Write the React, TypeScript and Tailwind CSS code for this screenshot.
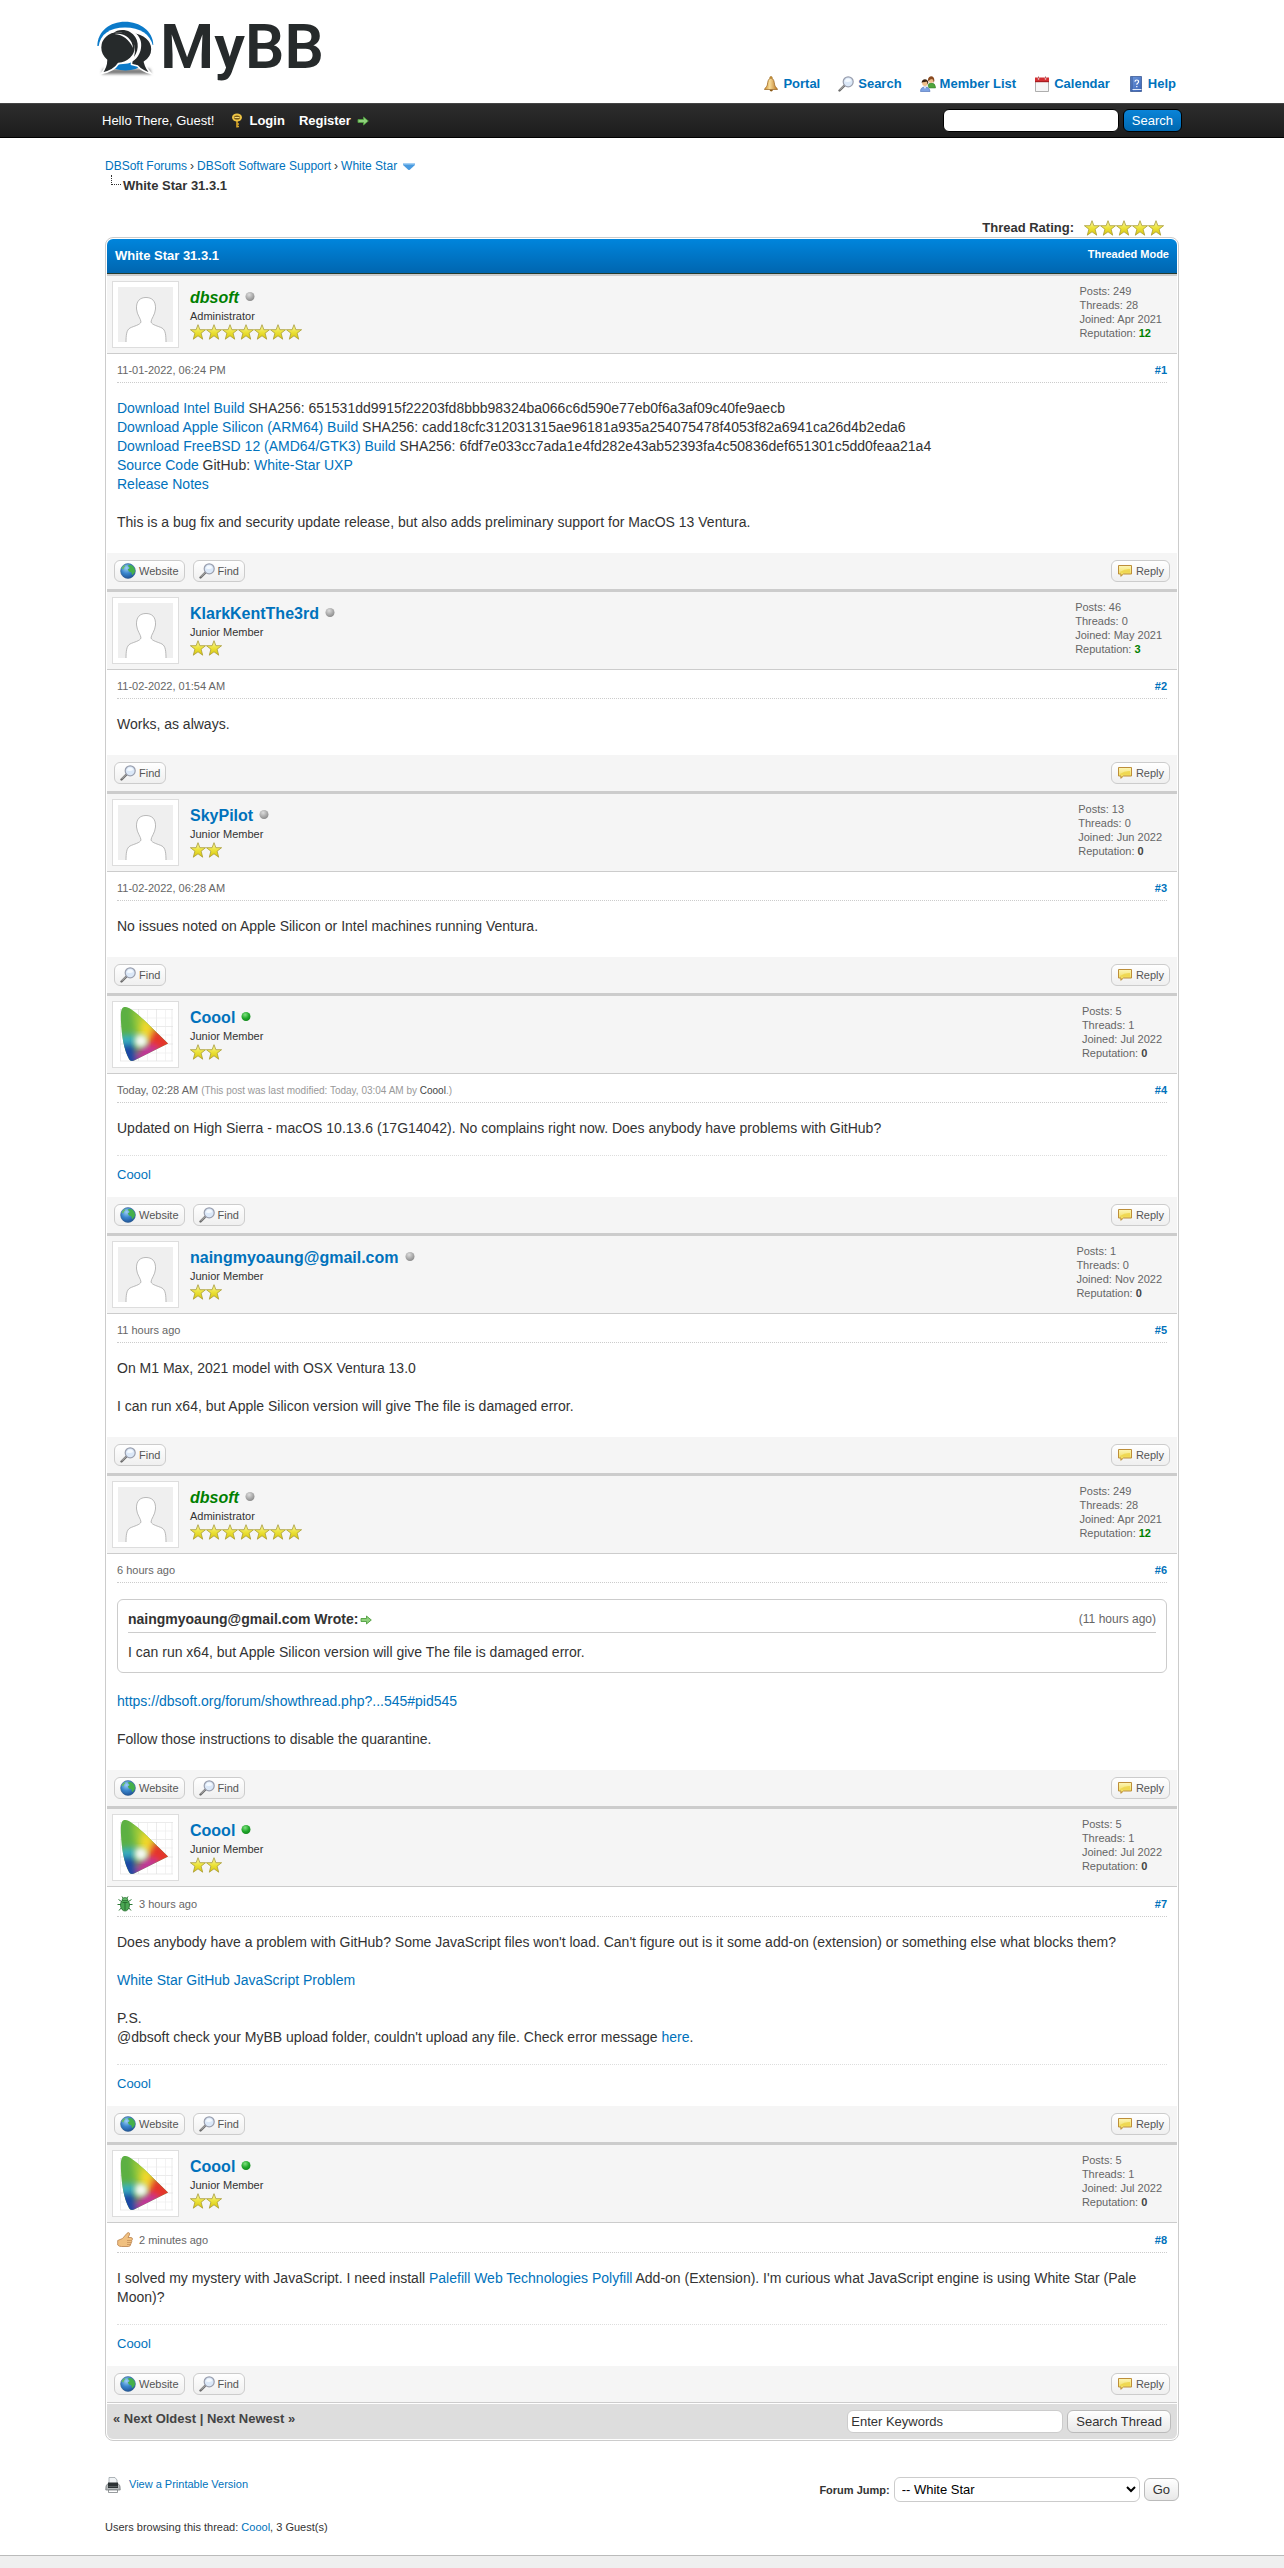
import { ReactNode } from "react";
import clsx from "clsx";

type Post = {
	id: number;
	author: string;
	admin?: boolean;
	online?: boolean;
	title: string;
	stars: number;
	avatar: "person" | "gamut";
	posts: number;
	threads: number;
	joined: string;
	rep: number;
	date: string;
	edited?: boolean;
	icon?: ReactNode;
	website?: boolean;
	signature?: string;
	body: ReactNode;
};

const A = ({ children }: { children: ReactNode }) => (
	<a href="#" className="text-[#0072bc] hover:underline">
		{children}
	</a>
);

/* ---------- icons ---------- */

function SharedGradients() {
	return (
		<svg className="absolute h-0 w-0" aria-hidden="true">
			<defs>
				<linearGradient id="starFill" x1="0" y1="0" x2="0" y2="1">
					<stop offset="0" stopColor="#fbf8b0" />
					<stop offset="0.5" stopColor="#ece33a" />
					<stop offset="1" stopColor="#d8c40c" />
				</linearGradient>
				<radialGradient id="globeFill" cx="0.4" cy="0.3" r="0.75">
					<stop offset="0" stopColor="#9fd0f5" />
					<stop offset="0.5" stopColor="#3a86cc" />
					<stop offset="1" stopColor="#1c4f94" />
				</radialGradient>
				<linearGradient id="bellFill" x1="0" y1="0" x2="1" y2="0">
					<stop offset="0" stopColor="#c98a2b" />
					<stop offset="0.4" stopColor="#f8dc98" />
					<stop offset="1" stopColor="#b97420" />
				</linearGradient>
				<linearGradient id="noteFill" x1="0" y1="0" x2="0" y2="1">
					<stop offset="0" stopColor="#fdf6b8" />
					<stop offset="1" stopColor="#efd84a" />
				</linearGradient>
				<linearGradient id="bookFill" x1="0" y1="0" x2="1" y2="1">
					<stop offset="0" stopColor="#6f9ade" />
					<stop offset="1" stopColor="#3a62b4" />
				</linearGradient>
				<radialGradient id="offFill" cx="0.4" cy="0.3" r="0.7">
					<stop offset="0" stopColor="#dcdcdc" />
					<stop offset="1" stopColor="#8c8c8c" />
				</radialGradient>
				<radialGradient id="onFill" cx="0.4" cy="0.3" r="0.7">
					<stop offset="0" stopColor="#7fe07f" />
					<stop offset="0.6" stopColor="#22a92c" />
					<stop offset="1" stopColor="#128a1c" />
				</radialGradient>
				<clipPath id="gamutClip">
					<path d="M6 0C3 1 2.500 6 3 15C3.500 28 6 43 11 52C12 54 14 54.500 16 53.500L50 36.500L26 13C18 6 12 1 9 0.300C8 0 7 0 6 0Z" />
				</clipPath>
				<filter id="gamutBlur" x="-50%" y="-50%" width="200%" height="200%">
					<feGaussianBlur stdDeviation="3" />
				</filter>
				<filter id="logoShadow" x="-20%" y="-50%" width="140%" height="200%">
					<feGaussianBlur stdDeviation="1.500" />
				</filter>
			</defs>
		</svg>
	);
}

function Logo() {
	return (
		<svg width="60" height="60" viewBox="0 0 60 60" aria-hidden="true">
			<path d="M7 50h47l1 5H6z" fill="#777" filter="url(#logoShadow)" />
			<path d="M1.300 27C1.500 12 14 2.700 29 2.700S57 12 57.300 26z" fill="#0b7ac9" />
			<path d="M2.500 28C4 15 14 8.500 29 8.500S54 15 57 27l-4 12H6z" fill="#fff" />
			<ellipse cx="29.500" cy="46.500" rx="14" ry="5" fill="#0b7ac9" />
			<path
				d="M37 13.500c11 1 19 8 19 16.500 0 5-3 10-7.500 13 1 4 3 8 6.500 11.500-6-1.500-10.500-4-13.500-7.500l-6-1.500z"
				fill="#262a2b"
				stroke="#fff"
				strokeWidth="1.600"
			/>
			<path
				d="M17 13C22 9 31 8.500 38 13c6 4 8 10 7 16-1 8-7 14-13 15.500l-10 1z"
				fill="#fff"
			/>
			<path
				d="M22 12.500c10 0 17.500 6.500 17.500 15.500S32 44 22.500 44.500C19.500 49.500 13 53 5.500 54.500 9 50 10.500 46 10.500 41 7 38 4.500 34 4.500 28.500 4.500 19.500 12 12.500 22 12.500z"
				fill="#262a2b"
				stroke="#fff"
				strokeWidth="1.600"
			/>
			<path d="M18 14c2-3 10-4.500 16-1 9 5 10 17 4 25 3-10-1-20-10-23.500-3.500-1.500-7-1.500-10-.5z" fill="#262a2b" />
			<path d="M18.500 15c10-1.500 18 5 18.500 14C33 20 27 16 18.500 15z" fill="#fff" />
		</svg>
	);
}

const BellIcon = () => (
	<svg width="16" height="16" viewBox="0 0 16 16" aria-hidden="true">
		<circle cx="8" cy="1.800" r="1.300" fill="#d9a23f" stroke="#8c5a17" strokeWidth=".5" />
		<path d="M8 2C5 2.500 4.800 6 4.300 9 3.900 11 2 11.500 1.500 13.500h13c-.5-2-2.400-2.500-2.800-4.500C11.200 6 11 2.500 8 2z" fill="url(#bellFill)" stroke="#96621d" strokeWidth=".7" />
		<path d="M6.500 13.800H10q-.3 1.700-1.700 1.700t-1.800-1.700z" fill="#8c5a17" />
	</svg>
);

const LensIcon = () => (
	<svg width="16" height="16" viewBox="0 0 16 16" aria-hidden="true">
		<path d="M6.500 9.500L1.500 14.500" stroke="#6c6c6c" strokeWidth="2.400" strokeLinecap="round" />
		<path d="M6.300 9.300L1.800 13.800" stroke="#bcbcbc" strokeWidth="1" />
		<circle cx="10.200" cy="5.800" r="5" fill="#dbe8f8" stroke="#9a9fae" strokeWidth="1.200" />
		<path d="M7 5.500a3.200 3.200 0 0 1 6.300-.6q-3 1.700-6.300.6z" fill="#f5faff" />
	</svg>
);

const MembersIcon = () => (
	<svg width="16" height="16" viewBox="0 0 16 16" aria-hidden="true">
		<path d="M8 10q0-3 3.500-3t4 4v1H9z" fill="#4fa43c" stroke="#2f7a22" strokeWidth=".5" />
		<circle cx="11" cy="4.300" r="2.700" fill="#edbd8e" />
		<path d="M8 5c-.6-6 7-6.500 6.300 0l-.6 2q0-3-1.500-4Q10 3 9 4.500z" fill="#8a4a20" />
		<path d="M.5 15.500q0-4.500 4.500-4.500t5 4.500z" fill="#7da3e3" stroke="#4569b5" strokeWidth=".6" />
		<circle cx="5" cy="7" r="2.900" fill="#f0c08a" />
		<path d="M1.700 7C1.200 2 8.600 1.800 8.300 7L7.500 8.500Q7.500 6 6.500 5.500 4 6.500 3 6z" fill="#3b2412" />
		<path d="M4 11l1 2 1-2z" fill="#fff" />
	</svg>
);

const CalendarIcon = () => (
	<svg width="16" height="16" viewBox="0 0 16 16" aria-hidden="true">
		<path d="M1.500 2.500h13v13h-13z" fill="#f6f6f6" stroke="#9a9a9a" strokeWidth=".8" />
		<path d="M1 1.500h14V6H1z" fill="#d22f33" />
		<path d="M1 5h14v1.200H1z" fill="#a81c20" />
		<path d="M4.500.5v3M11.500.5v3" stroke="#fff" strokeWidth="1.300" />
		<path d="M4.500.5v2M11.500.5v2" stroke="#8b1417" strokeWidth=".7" />
	</svg>
);

const HelpIcon = () => (
	<svg width="16" height="16" viewBox="0 0 16 16" aria-hidden="true">
		<path d="M2.500.5h11v15h-11z" fill="url(#bookFill)" stroke="#2d4d8c" strokeWidth=".7" />
		<path d="M4 .8v14.400" stroke="#2d4d8c" strokeWidth=".8" />
		<path d="M4.500 13.500h9" stroke="#dfe8f8" strokeWidth="1" />
		<path d="M7 5.800q0-1.800 1.800-1.800t1.800 1.600q0 1-1 1.700-.8.500-.8 1.400M8.800 10v1.300" fill="none" stroke="#fff" strokeWidth="1.200" />
	</svg>
);

const KeyIcon = () => (
	<svg width="12" height="16" viewBox="0 0 12 16" aria-hidden="true">
		<path d="M6 8v6.500M6 11h2M6 13.500h2" stroke="#d9a628" strokeWidth="1.600" />
		<ellipse cx="6" cy="4.500" rx="4" ry="3" fill="#6b4c0e" stroke="#edc344" strokeWidth="2" />
		<path d="M3.500 4.500h5" stroke="#f7dc78" strokeWidth="1.200" />
	</svg>
);

const ArrowIcon = () => (
	<svg width="12" height="12" viewBox="0 0 12 12" aria-hidden="true">
		<path d="M1 4.500h5.500V2L11.300 6 6.500 10V7.500H1z" fill="#8fd07c" stroke="#4f9e3e" strokeWidth=".9" strokeLinejoin="round" />
	</svg>
);

const GlobeIcon = () => (
	<svg width="16" height="16" viewBox="0 0 16 16" aria-hidden="true">
		<circle cx="8" cy="8" r="7.400" fill="url(#globeFill)" stroke="#34608f" strokeWidth=".6" />
		<path d="M7.500 2.500q3-1.500 5.500.8 2.500 2.500 2 5.700-1.500 2-2.500 3.200-1-.5-1-2.700L9 8.500 7.800 6.500l2-1.500z" fill="#45b04a" />
		<path d="M1.500 5.500Q2.500 3 5 2q1 1-.5 2t-.8 2.500z" fill="#63bf62" />
	</svg>
);

const NoteIcon = () => (
	<svg width="16" height="16" viewBox="0 0 16 16" aria-hidden="true">
		<path d="M1.500 2.500h13v8.500H6.500L3.800 13.300 4 11H1.500z" fill="url(#noteFill)" stroke="#bd8e3a" strokeWidth="1" strokeLinejoin="round" />
		<path d="M3 9q5-3.500 10-3V9.800H3z" fill="#ecd23e" opacity=".7" />
	</svg>
);

const BugIcon = () => (
	<svg width="16" height="16" viewBox="0 0 16 16" aria-hidden="true">
		<path d="M4.500 5.500L1.500 3.500M11.500 5.500l3-2M4 8.500H.5M12 8.500h3.500M4.500 11.500l-2.500 3M11.500 11.500l2.500 3M6 2L5 .5M10 2l1-1.500" stroke="#2c7a35" strokeWidth="1" fill="none" />
		<ellipse cx="8" cy="9" rx="4.500" ry="6" fill="#4aa653" stroke="#246b2c" strokeWidth=".8" />
		<path d="M5 4.500q0-3 3-3t3 3z" fill="#62b869" stroke="#246b2c" strokeWidth=".7" />
		<path d="M8 6.500v7.500M5.500 6.500h5" stroke="#1f6327" strokeWidth=".8" />
	</svg>
);

const ThumbIcon = () => (
	<svg width="16" height="16" viewBox="0 0 16 16" aria-hidden="true">
		<path
			d="M.7 8.500L5.500 6.500 10 1.300q1.500-1.500 2.600 0 .3 1.500-1.600 4.200h3q1.800.3 1.400 1.800-.2 1-.7 1.200.4 1-.3 1.700.1 1.200-.6 1.600 0 2.500-2.300 2.700H4.500q-2.500 0-3.800-1.500z"
			fill="#f0c080"
			stroke="#b9824e"
			strokeWidth=".8"
			strokeLinejoin="round"
		/>
		<path d="M10 8.500h4.700M10 10.500h4.400M10 12.500h3.700" stroke="#b9824e" strokeWidth=".6" />
	</svg>
);

const PrinterIcon = () => (
	<svg width="16" height="16" viewBox="0 0 16 16" aria-hidden="true">
		<path d="M4 .5h6L12 3v4H4z" fill="#f1f4f6" stroke="#8e979b" strokeWidth=".7" />
		<path d="M.8 13q-.5-5 2.200-6.500h10Q15.700 8 15.200 13z" fill="#b8bcbe" stroke="#6b7174" strokeWidth=".7" />
		<path d="M3 5.500h10V11H3z" fill="#2d3335" />
		<path d="M3.500 9.500h9" stroke="#62696c" strokeWidth=".8" />
		<path d="M3.500 13h9v2.500h-9z" fill="#fff" stroke="#6b7174" strokeWidth=".7" />
	</svg>
);

const Stars = ({ count }: { count: number }) => (
	<svg width={count * 16} height="16" viewBox={`0 0 ${count * 16} 16`} role="img" aria-label={`${count} stars`}>
		{Array.from({ length: count }, (_, i) => (
			<path
				key={i}
				transform={`translate(${i * 16} 0)`}
				d="M8 .7l1.900 5h5.700l-4.500 3.500 1.600 6L8 11.800l-4.700 3.400 1.600-6L.4 5.700h5.700z"
				fill="url(#starFill)"
				stroke="#a89c35"
				strokeWidth=".8"
				strokeLinejoin="round"
			/>
		))}
	</svg>
);

function PersonAvatar() {
	return (
		<svg width="55" height="55" viewBox="0 0 55 55" role="img" aria-label="Avatar">
			<path d="M0 0h55v55H0z" fill="#efefef" />
			<path
				d="M8 56c0-8 .5-13 4-15 4-2 10-3 11-6 0-3-4-7-4.500-13C18 14 22 10.500 28 10.500S38 14 37.500 22C37 28 33 32 33 35c1 3 7 4 11 6 3.500 2 4 7 4 15z"
				fill="#fff"
				stroke="#a8a8a8"
				strokeWidth=".8"
			/>
		</svg>
	);
}

function GamutAvatar() {
	return (
		<svg width="55" height="55" viewBox="0 0 55 55" role="img" aria-label="Avatar">
			<path
				d="M2 2.500h53M2 19.500h53M2 37h53M2 54h53M2.500 2v52M20.500 2v52M38.500 2v52M54 2v52"
				stroke="#ddd"
				strokeWidth=".6"
			/>
			<path d="M2 11h53M2 28h53M2 46h53M11.500 2v52M29.500 2v52M47.500 2v52" stroke="#ebebeb" strokeWidth=".6" />
			<g clipPath="url(#gamutClip)">
				<path d="M0 0h55v55H0z" fill="#5cb043" />
				<g filter="url(#gamutBlur)">
					<path d="M14 0L32 12 26 30 17 26z" fill="#9ecb38" />
					<path d="M26 8l14 15-11 11-7-8z" fill="#f3d92c" />
					<path d="M36 20l24 16-16 10-16-9z" fill="#e5352b" />
					<path d="M23 40l12-2 7 6-20 14-4-6z" fill="#c4309a" />
					<path d="M-4 35l20 2 6 24-26 4z" fill="#1c46a4" />
					<path d="M2 28h15l2 8-17 2z" fill="#38b0c4" />
				</g>
				<circle cx="23" cy="34" r="5" fill="#fff" filter="url(#gamutBlur)" />
				<circle cx="23" cy="34" r="5" fill="#fff" filter="url(#gamutBlur)" />
			</g>
		</svg>
	);
}

/* ---------- data ---------- */

const coool = {
	author: "Coool",
	online: true,
	title: "Junior Member",
	stars: 2,
	avatar: "gamut" as const,
	posts: 5,
	threads: 1,
	joined: "Jul 2022",
	rep: 0,
	website: true,
	signature: "Coool",
};

const dbsoft = {
	author: "dbsoft",
	admin: true,
	title: "Administrator",
	stars: 7,
	avatar: "person" as const,
	posts: 249,
	threads: 28,
	joined: "Apr 2021",
	rep: 12,
	website: true,
};

const member = { title: "Junior Member", stars: 2, avatar: "person" as const };

const posts: Post[] = [
	{
		...dbsoft,
		id: 1,
		date: "11-01-2022, 06:24 PM",
		body: (
			<>
				<A>Download Intel Build</A> SHA256: 651531dd9915f22203fd8bbb98324ba066c6d590e77eb0f6a3af09c40fe9aecb<br />
				<A>Download Apple Silicon (ARM64) Build</A> SHA256: cadd18cfc312031315ae96181a935a254075478f4053f82a6941ca26d4b2eda6<br />
				<A>Download FreeBSD 12 (AMD64/GTK3) Build</A> SHA256: 6fdf7e033cc7ada1e4fd282e43ab52393fa4c50836def651301c5dd0feaa21a4<br />
				<A>Source Code</A> GitHub: <A>White-Star UXP</A><br />
				<A>Release Notes</A><br />
				<br />
				This is a bug fix and security update release, but also adds preliminary support for MacOS 13 Ventura.
			</>
		),
	},
	{
		...member,
		id: 2,
		author: "KlarkKentThe3rd",
		posts: 46,
		threads: 0,
		joined: "May 2021",
		rep: 3,
		date: "11-02-2022, 01:54 AM",
		body: "Works, as always.",
	},
	{
		...member,
		id: 3,
		author: "SkyPilot",
		posts: 13,
		threads: 0,
		joined: "Jun 2022",
		rep: 0,
		date: "11-02-2022, 06:28 AM",
		body: "No issues noted on Apple Silicon or Intel machines running Ventura.",
	},
	{
		...coool,
		id: 4,
		date: "Today, 02:28 AM",
		edited: true,
		body: "Updated on High Sierra - macOS 10.13.6 (17G14042). No complains right now. Does anybody have problems with GitHub?",
	},
	{
		...member,
		id: 5,
		author: "naingmyoaung@gmail.com",
		posts: 1,
		threads: 0,
		joined: "Nov 2022",
		rep: 0,
		date: "11 hours ago",
		body: (
			<>
				On M1 Max, 2021 model with OSX Ventura 13.0<br />
				<br />
				I can run x64, but Apple Silicon version will give The file is damaged error.
			</>
		),
	},
	{
		...dbsoft,
		id: 6,
		date: "6 hours ago",
		body: (
			<>
				<blockquote className="rounded-md border border-[#ccc] bg-white p-[10px]">
					<div className="mb-[10px] flex items-center justify-between border-b border-[#ccc] pb-[3px]">
						<cite className="flex items-center font-bold not-italic">
							naingmyoaung@gmail.com Wrote:
							<a href="#" className="ml-[2px]" aria-label="Go to post"><ArrowIcon /></a>
						</cite>
						<span className="text-xs leading-[19px] text-[#666]">(11 hours ago)</span>
					</div>
					I can run x64, but Apple Silicon version will give The file is damaged error.
				</blockquote>
				<br />
				<A>https://dbsoft.org/forum/showthread.php?...545#pid545</A><br />
				<br />
				Follow those instructions to disable the quarantine.
			</>
		),
	},
	{
		...coool,
		id: 7,
		date: "3 hours ago",
		icon: <BugIcon />,
		body: (
			<>
				Does anybody have a problem with GitHub? Some JavaScript files won't load. Can't figure out is it some add-on (extension) or something else what blocks them?<br />
				<br />
				<A>White Star GitHub JavaScript Problem</A><br />
				<br />
				P.S.<br />
				@dbsoft check your MyBB upload folder, couldn't upload any file. Check error message <A>here</A>.
			</>
		),
	},
	{
		...coool,
		id: 8,
		date: "2 minutes ago",
		icon: <ThumbIcon />,
		body: (
			<>
				I solved my mystery with JavaScript. I need install <A>Palefill Web Technologies Polyfill</A> Add-on (Extension). I'm curious what JavaScript engine is using White Star (Pale Moon)?
			</>
		),
	},
];

const menu = [
	{ label: "Portal", icon: <BellIcon /> },
	{ label: "Search", icon: <LensIcon /> },
	{ label: "Member List", icon: <MembersIcon /> },
	{ label: "Calendar", icon: <CalendarIcon /> },
	{ label: "Help", icon: <HelpIcon /> },
];

/* ---------- pieces ---------- */

function PostButton({ icon, label }: { icon: ReactNode; label: string }) {
	return (
		<a
			href="#"
			className="flex h-[22px] items-center gap-[3px] rounded-md border border-[#ccc] bg-linear-to-b from-white to-[#efefef] px-[5px] text-[11px] text-[#555]"
		>
			{icon}
			{label}
		</a>
	);
}

function PostItem({ post }: { post: Post }) {
	return (
		<article>
			<div className="flex items-start border-t-2 border-b border-t-[#ccc] border-b-[#ccc] bg-[#f5f5f5] p-[5px]">
				<a href="#" className="border border-[#ddd] bg-white p-[5px]">
					{post.avatar === "person" ? <PersonAvatar /> : <GamutAvatar />}
				</a>
				<div className="ml-[11px] flex-1 pt-[6px]">
					<div className="flex h-[22px] items-center gap-[6px]">
						<a
							href="#"
							className={clsx("text-base font-bold", post.admin ? "text-[#008000] italic" : "text-[#0072bc]")}
						>
							{post.author}
						</a>
						<svg width="10" height="12" viewBox="0 0 10 12" role="img" aria-label={post.online ? "Online" : "Offline"}>
							<circle cx="5" cy="4.500" r="4.500" fill={post.online ? "url(#onFill)" : "url(#offFill)"} />
						</svg>
					</div>
					<div className="text-[11px] leading-[15px]">{post.title}</div>
					<Stars count={post.stars} />
				</div>
				<div className="mr-[10px] pt-[3px] text-[11px] leading-[14px] text-[#666]">
					<div>Posts: {post.posts}</div>
					<div>Threads: {post.threads}</div>
					<div>Joined: {post.joined}</div>
					<div>
						Reputation: <strong className={post.rep > 0 ? "text-[#008000]" : "text-[#444]"}>{post.rep}</strong>
					</div>
				</div>
			</div>
			<div className="bg-white px-[10px] py-[9px]">
				<div className="mb-1 flex items-center border-b border-dotted border-[#ccc] pb-1 text-[11px] leading-[15px] text-[#666]">
					{post.icon && <span className="mr-[6px]">{post.icon}</span>}
					<span>{post.date}</span>
					{post.edited && (
						<span className="ml-[3px] text-[10px] text-[#999]">
							(This post was last modified: Today, 03:04 AM by <a href="#" className="text-[#444]">Coool</a>.)
						</span>
					)}
					<a href="#" className="ml-auto font-bold text-[#0072bc]">#{post.id}</a>
				</div>
				<div className="py-3 text-sm leading-[19px]">{post.body}</div>
				{post.signature && (
					<div className="mt-[5px] border-t border-dotted border-[#ddd] pt-[10px] pb-1 leading-[18px]">
						<A>{post.signature}</A>
					</div>
				)}
			</div>
			<div className="flex items-start justify-between border-b border-[#ccc] bg-[#f5f5f5] p-[7px]">
				<div className="flex gap-2">
					{post.website && <PostButton icon={<GlobeIcon />} label="Website" />}
					<PostButton icon={<LensIcon />} label="Find" />
				</div>
				<PostButton icon={<NoteIcon />} label="Reply" />
			</div>
		</article>
	);
}

const greyButton = "cursor-pointer rounded-md border border-[#bbb] bg-linear-to-b from-white to-[#e8e8e8] px-2 text-[13px] text-[#333]";

export default function App() {
	return (
		<div className="min-h-screen bg-[#efefef] font-['Liberation_Sans',Arial,sans-serif] text-[13px] leading-[18px] text-[#333]">
			<SharedGradients />
			<header>
				<div className="bg-white">
					<div className="mx-24 flex h-[103px] items-start justify-between">
						<a href="#" className="mt-[19px] flex items-start gap-1" aria-label="MyBB">
							<Logo />
							<span className="font-['Roboto',sans-serif] text-[62px] leading-[56px] font-semibold text-[#262a2b]">MyBB</span>
						</a>
						<nav className="mt-[75px] mr-3">
							<ul className="flex gap-[18px]">
								{menu.map(item => (
									<li key={item.label}>
										<a href="#" className="flex items-center gap-1 font-bold text-[#0072bc]">
											{item.icon}
											{item.label}
										</a>
									</li>
								))}
							</ul>
						</nav>
					</div>
				</div>
				<div className="border-t border-b border-t-[#444] border-b-black bg-linear-to-b from-[#2d2d2d] to-[#1c1c1c]">
					<div className="mx-24 flex h-[33px] items-center px-[6px] text-white">
						<span>Hello There, Guest!</span>
						<a href="#" className="ml-[17px] flex items-center gap-[6px] font-bold"><KeyIcon />Login</a>
						<a href="#" className="ml-[14px] flex items-center gap-[6px] font-bold">Register<ArrowIcon /></a>
						<form className="ml-auto flex gap-1" onSubmit={e => e.preventDefault()}>
							<input
								type="text"
								aria-label="Search"
								className="h-[23px] w-44 rounded-md border border-black bg-white px-1 text-[#333]"
							/>
							<button className="h-[23px] cursor-pointer rounded-md border border-black bg-linear-to-b from-[#0a84d8] to-[#0068b0] px-2">
								Search
							</button>
						</form>
					</div>
				</div>
			</header>

			<main className="border-b border-[#bbb] bg-white pb-[19px]">
				<div className="mx-24 px-[9px] pt-[19px]">
					<nav className="text-xs leading-[18px]">
						<div className="flex items-center gap-[3px]">
							<A>DBSoft Forums</A>›<A>DBSoft Software Support</A>›<A>White Star</A>
							<svg className="ml-[2px]" width="14" height="9" viewBox="0 0 14 9" aria-hidden="true">
								<path d="M1 1h12v2L7.500 8h-1L1 3z" fill="#4a9be0" />
								<path d="M1 1h12v1.500H1z" fill="#a5d0f5" />
							</svg>
						</div>
						<div className="flex items-start text-[13px] leading-[22px] font-bold">
							<span className="ml-[6px] h-[10px] w-[10px] border-b border-l border-dotted border-[#333]" />
							<span className="ml-[2px]">White Star 31.3.1</span>
						</div>
					</nav>

					<div className="mt-[22px] mr-[15px] flex items-center justify-end gap-[10px]">
						<strong>Thread Rating:</strong>
						<Stars count={5} />
					</div>

					<section className="rounded-lg border border-[#ccc] bg-white p-[1px]">
						<div className="flex items-start justify-between rounded-t-md border-b border-[#263c30] bg-linear-to-b from-[#0085dc] to-[#0066b0] p-2 font-bold text-white">
							<h1>White Star 31.3.1</h1>
							<a href="#" className="text-[11px] leading-[14px]">Threaded Mode</a>
						</div>
						{posts.map(post => <PostItem key={post.id} post={post} />)}
						<div className="flex items-start justify-between rounded-b-md border-t border-white bg-[#ddd] p-[6px] text-[#444]">
							<div className="font-bold">
								« <a href="#">Next Oldest</a> | <a href="#">Next Newest</a> »
							</div>
							<form className="flex gap-1" onSubmit={e => e.preventDefault()}>
								<input
									type="text"
									aria-label="Enter Keywords"
									defaultValue="Enter Keywords"
									className="h-[23px] w-54 rounded-md border border-[#ccc] bg-white px-[3px] text-[#333]"
								/>
								<button className={clsx(greyButton, "h-[23px]")}>Search Thread</button>
							</form>
						</div>
					</section>

					<div className="mt-9 flex items-start justify-between">
						<a href="#" className="flex items-start gap-2 text-[11px] leading-[14px] text-[#0072bc]">
							<PrinterIcon />
							View a Printable Version
						</a>
						<form className="flex items-center gap-1" onSubmit={e => e.preventDefault()}>
							<label htmlFor="jump" className="text-[11px] font-bold">Forum Jump:</label>
							<select id="jump" className="h-[25px] w-[246px] rounded-md border border-[#ccc] bg-white px-[3px] text-black">
								<option>-- White Star</option>
							</select>
							<button className={clsx(greyButton, "h-[23px]")}>Go</button>
						</form>
					</div>
					<div className="mt-4 text-[11px]">
						Users browsing this thread: <A>Coool</A>, 3 Guest(s)
					</div>
				</div>
			</main>
		</div>
	);
}
